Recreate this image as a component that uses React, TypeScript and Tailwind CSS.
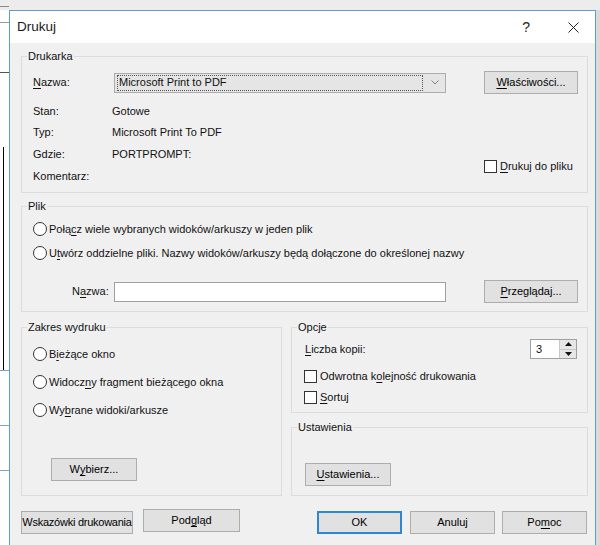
import type { ReactNode } from "react";
import clsx from "clsx";

// Mnemonic letter (underlined access key)
function U({ children }: { children: ReactNode }) {
  return <span className="underline underline-offset-[2px] decoration-[1px]">{children}</span>;
}

function Btn({
  children,
  className,
  primary,
}: {
  children: ReactNode;
  className?: string;
  primary?: boolean;
}) {
  return (
    <button
      type="button"
      className={clsx(
        "h-[23px] shrink-0 bg-[#e1e1e1] text-[11px] leading-none text-black whitespace-nowrap px-0 flex items-center justify-center",
        primary ? "border-2 border-[#2f86d3]" : "border border-[#adadad]",
        className
      )}
    >
      {children}
    </button>
  );
}

function Radio({ children }: { children: ReactNode }) {
  return (
    <div className="flex items-center h-full">
      <span className="w-[14px] h-[14px] rounded-full border border-[#333] bg-white shrink-0" />
      <span className="ml-[2px]">{children}</span>
    </div>
  );
}

function Check({ children }: { children: ReactNode }) {
  return (
    <div className="flex items-center">
      <span className="w-[13px] h-[13px] border border-[#333] bg-white shrink-0" />
      <span className="ml-[3px]">{children}</span>
    </div>
  );
}

function Legend({ children }: { children: ReactNode }) {
  return <legend className="ml-[5px] px-[1px] leading-[14px]">{children}</legend>;
}

export default function App() {
  return (
    <div className="w-[600px] h-[545px] overflow-hidden bg-[#e4e4e4] flex flex-col font-['Liberation_Sans',Arial,sans-serif] text-[11px] text-[#111]">
      {/* window behind the dialog */}
      <div className="h-[10px] shrink-0 bg-[#ececec] flex flex-col">
        <div className="h-[6px]" />
        <div className="h-px w-[9px] bg-[#8a8a8a]" />
      </div>

      <div className="flex flex-1 min-h-0">
        <div className="w-[9px] shrink-0 bg-white flex flex-col">
          <div className="h-[12px]" />
          <div className="h-px bg-[#9a9a9a]" />
          <div className="h-[49px]" />
          <div className="h-px bg-[#555]" />
          <div className="h-[74px]" />
          <div className="h-[223px] w-[4px] border-r border-black" />
          <div className="h-px bg-[#7ea4c4]" />
          <div className="h-[54px]" />
          <div className="h-px bg-[#7ea4c4]" />
          <div className="h-[44px]" />
          <div className="h-px bg-[#7ea4c4]" />
        </div>

        {/* dialog */}
        <div className="w-[587px] shrink-0 border border-b-0 border-[#5f9bd4] bg-[#f0f0f0] flex flex-col">
          {/* title bar */}
          <div className="h-[32px] shrink-0 bg-white flex items-center pl-[7px]">
            <span className="text-[13.5px] text-[#1a1a1a]">Drukuj</span>
            <span className="ml-auto text-[14px] text-[#222]">?</span>
            <svg className="ml-[38px] mr-[16px]" width="11" height="11" viewBox="0 0 11 11">
              <path d="M0.5 0.5 L10.5 10.5 M10.5 0.5 L0.5 10.5" stroke="#222" strokeWidth="1" />
            </svg>
          </div>

          {/* body */}
          <div className="pl-[11px] pr-[7px] pt-[6px] flex flex-col">
            {/* Drukarka */}
            <fieldset className="border border-[#dcdcdc] pb-[5px]">
              <Legend>Drukarka</Legend>
              <div className="mt-[8px] h-[23px] flex items-center pl-[11px]">
                <span className="w-[81px] shrink-0">
                  <U>N</U>azwa:
                </span>
                <div className="w-[332px] h-[20px] shrink-0 border border-[#acacac] bg-[#e5e5e5] flex items-center pl-[2px] pr-[6px]">
                  <div className="flex-1 h-[16px] border border-dotted border-[#555] flex items-center pl-[1px]">
                    Microsoft Print to PDF
                  </div>
                  <svg className="ml-[8px]" width="8" height="5" viewBox="0 0 8 5">
                    <path d="M0.5 0.5 L4 4 L7.5 0.5" fill="none" stroke="#808080" strokeWidth="1" />
                  </svg>
                </div>
                <Btn className="ml-[38px] w-[94px]">
                  <span>
                    <U>W</U>łaściwości...
                  </span>
                </Btn>
              </div>

              <div className="mt-[7px] flex">
                <div className="w-[462px] shrink-0 pl-[11px] flex flex-col">
                  <div className="h-[21px] flex items-center">
                    <span className="w-[79px] shrink-0">Stan:</span>
                    <span>Gotowe</span>
                  </div>
                  <div className="h-[21px] flex items-center">
                    <span className="w-[79px] shrink-0">Typ:</span>
                    <span>Microsoft Print To PDF</span>
                  </div>
                  <div className="h-[22px] flex items-center">
                    <span className="w-[79px] shrink-0">Gdzie:</span>
                    <span>PORTPROMPT:</span>
                  </div>
                  <div className="h-[22px] flex items-center">
                    <span className="w-[79px] shrink-0">Komentarz:</span>
                  </div>
                </div>
                <div className="pt-[57px]">
                  <Check>
                    <U>D</U>rukuj do pliku
                  </Check>
                </div>
              </div>
            </fieldset>

            {/* Plik */}
            <fieldset className="mt-[6px] border border-[#dcdcdc] pb-[8px]">
              <Legend>Plik</Legend>
              <div className="mt-[4px] pl-[11px] flex flex-col">
                <div className="h-[24px]">
                  <Radio>
                    Połą<U>c</U>z wiele wybranych widoków/arkuszy w jeden plik
                  </Radio>
                </div>
                <div className="h-[24px]">
                  <Radio>
                    U<U>t</U>wórz oddzielne pliki. Nazwy widoków/arkuszy będą dołączone do określonej nazwy
                  </Radio>
                </div>
              </div>
              <div className="mt-[15px] h-[23px] flex items-center pl-[50px]">
                <span className="w-[42px] shrink-0">
                  N<U>a</U>zwa:
                </span>
                <div className="w-[332px] h-[20px] shrink-0 border border-[#a0a0a0] bg-white" />
                <Btn className="ml-[38px] w-[94px]">
                  <span>
                    <U>P</U>rzeglądaj...
                  </span>
                </Btn>
              </div>
            </fieldset>

            {/* Zakres + Opcje/Ustawienia */}
            <div className="mt-[8px] flex">
              <fieldset className="w-[261px] shrink-0 border border-[#dcdcdc] pb-[14px]">
                <Legend>Zakres wydruku</Legend>
                <div className="mt-[6px] pl-[11px] flex flex-col">
                  <div className="h-[28px]">
                    <Radio>
                      B<U>i</U>eżące okno
                    </Radio>
                  </div>
                  <div className="h-[28px]">
                    <Radio>
                      Widocz<U>n</U>y fragment bieżącego okna
                    </Radio>
                  </div>
                  <div className="h-[28px]">
                    <Radio>
                      Wy<U>b</U>rane widoki/arkusze
                    </Radio>
                  </div>
                </div>
                <Btn className="mt-[34px] ml-[29px] w-[86px]">
                  <span>
                    W<U>y</U>bierz...
                  </span>
                </Btn>
              </fieldset>

              <div className="ml-[9px] flex-1 flex flex-col">
                <fieldset className="border border-[#dcdcdc] pb-[4px]">
                  <Legend>Opcje</Legend>
                  <div className="mt-[5px] h-[20px] flex items-center pl-[13px] pr-[10px]">
                    <span>
                      <U>L</U>iczba kopii:
                    </span>
                    <div className="ml-auto w-[47px] h-[20px] flex border border-[#a0a0a0] bg-white">
                      <div className="flex-1 flex items-center pl-[5px]">3</div>
                      <div className="w-[17px] flex flex-col border-l border-[#c8c8c8] bg-[#e6e6e6]">
                        <div className="flex-1 flex items-center justify-center border-b border-[#c8c8c8]">
                          <svg width="7" height="4" viewBox="0 0 7 4">
                            <path d="M0 4 L3.5 0 L7 4 Z" fill="#111" />
                          </svg>
                        </div>
                        <div className="flex-1 flex items-center justify-center">
                          <svg width="7" height="4" viewBox="0 0 7 4">
                            <path d="M0 0 L7 0 L3.5 4 Z" fill="#111" />
                          </svg>
                        </div>
                      </div>
                    </div>
                  </div>
                  <div className="mt-[7px] pl-[12px] flex flex-col">
                    <div className="h-[21px] flex items-center">
                      <Check>
                        Odwrotna k<U>o</U>lejność drukowania
                      </Check>
                    </div>
                    <div className="h-[21px] flex items-center">
                      <Check>
                        <U>S</U>ortuj
                      </Check>
                    </div>
                  </div>
                </fieldset>

                <fieldset className="mt-[7px] flex-1 border border-[#dcdcdc] pb-[9px]">
                  <Legend>Ustawienia</Legend>
                  <Btn className="mt-[29px] ml-[13px] w-[86px]">
                    <span>
                      <U>U</U>stawienia...
                    </span>
                  </Btn>
                </fieldset>
              </div>
            </div>

            {/* bottom buttons */}
            <div className="mt-[15px] flex items-start">
              <Btn className="w-[112px] tracking-[-0.25px]">Wskazówki drukowania</Btn>
              <Btn className="ml-[10px] -mt-[2px] w-[97px]">
                <span>
                  Pod<U>g</U>ląd
                </span>
              </Btn>
              <Btn primary className="ml-[77px] w-[85px]">
                OK
              </Btn>
              <Btn className="ml-[8px] w-[85px]">Anuluj</Btn>
              <Btn className="ml-[7px] w-[85px]">
                <span>
                  Po<U>m</U>oc
                </span>
              </Btn>
            </div>
          </div>
        </div>

        <div className="flex-1 bg-[#dadada]" />
      </div>
    </div>
  );
}
